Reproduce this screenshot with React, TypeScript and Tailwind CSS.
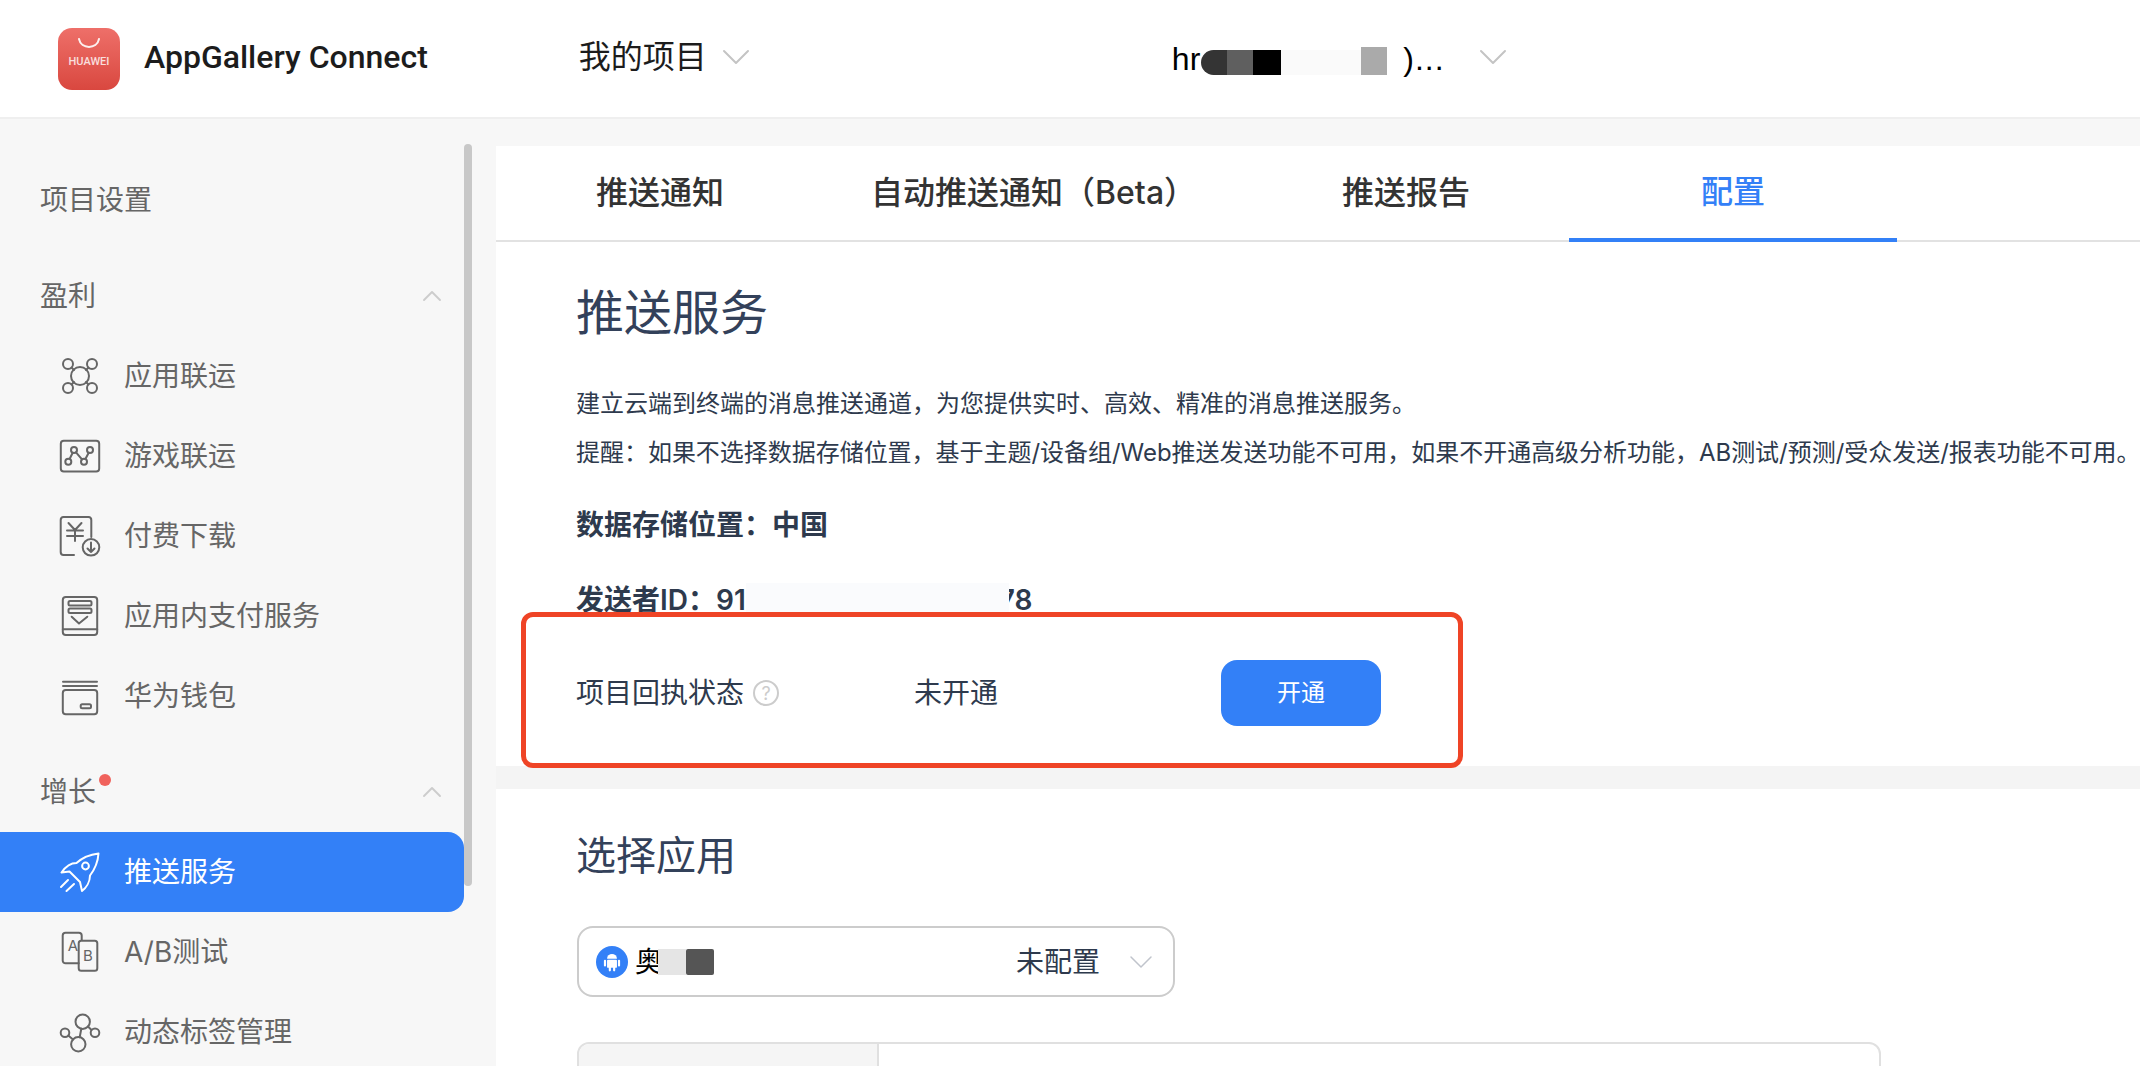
import { ChevronDown, ChevronUp } from 'lucide-react'
import type { ReactNode } from 'react'

const Svg = ({ children }: { children: ReactNode }) => (
  <svg
    viewBox="0 0 40 40"
    width={40}
    height={40}
    fill="none"
    stroke="currentColor"
    strokeWidth={2}
    strokeLinecap="round"
    strokeLinejoin="round"
    className="shrink-0 overflow-visible"
  >
    {children}
  </svg>
)

const HubIcon = () => (
  <Svg>
    <circle cx="20" cy="20" r="9" />
    <circle cx="8" cy="8" r="5" />
    <circle cx="32" cy="8" r="5" />
    <circle cx="8" cy="32" r="5" />
    <circle cx="32" cy="32" r="5" />
    <path d="M11.5 11.5 14 14M28.5 11.5 26 14M11.5 28.5 14 26M28.5 28.5 26 26" />
  </Svg>
)

const GameIcon = () => (
  <Svg>
    <rect x="0.8" y="4.8" width="38.4" height="30.6" rx="3" />
    <circle cx="8.3" cy="25.7" r="3" />
    <circle cx="14" cy="14" r="3" />
    <circle cx="24" cy="25.7" r="3" />
    <circle cx="30" cy="14" r="3" />
    <path d="M9.6 23 12.7 16.7M16 16.3 22 23.4M25.4 23 28.7 16.7" />
  </Svg>
)

const PaidIcon = () => (
  <Svg>
    <path d="M14 39H3.5A3 3 0 0 1 .7 36V4A3 3 0 0 1 3.5 1H28.5A3 3 0 0 1 31.3 4V21" />
    <path d="M8.5 7 15 14 21.5 7M7 14.5H23M7 20H23M15 14V25" />
    <circle cx="31" cy="31.3" r="8.3" />
    <path d="M31 26.5V36M27.5 32.5 31 36 34.5 32.5" />
  </Svg>
)

const PayIcon = () => (
  <Svg>
    <rect x="2.8" y="1" width="34.4" height="38" rx="3" />
    <rect x="8.5" y="5" width="23" height="4.6" rx="1.5" />
    <rect x="8.5" y="12.4" width="23" height="4.6" rx="1.5" />
    <path d="M11.7 20.7 19 27.5 27.3 20.7M2.8 33.3H37.2" />
  </Svg>
)

const WalletIcon = () => (
  <Svg>
    <path d="M3 5.7H37M3 10H37" />
    <rect x="2.8" y="14" width="34.4" height="24.3" rx="3" />
    <rect x="20.7" y="28.3" width="10.3" height="4" rx="1.5" />
  </Svg>
)

const RocketIcon = () => (
  <Svg>
    <path d="M38.5 1.5C30 2.5 22 6 16.5 11 12 11 6 14 1.5 20.5L9.5 19.5 20 30 22 39C26 36 30 30 30 23.5 35 17 38 9 38.5 1.5Z" />
    <circle cx="25.5" cy="14" r="3.4" />
    <path d="M1 35 8 28M6.5 39 14 32" />
  </Svg>
)

const AbIcon = () => (
  <Svg>
    <path d="M18.7 31.3H5.5A2.8 2.8 0 0 1 2.7 28.5V3.5A2.8 2.8 0 0 1 5.5.8H18.9A2.8 2.8 0 0 1 21.7 3.5V8" />
    <rect x="18.7" y="8.7" width="18.6" height="30" rx="2.5" />
    <text x="13" y="19" fontSize="15" textAnchor="middle" fill="currentColor" stroke="none" fontFamily="Inter, sans-serif">A</text>
    <text x="28" y="29" fontSize="15" textAnchor="middle" fill="currentColor" stroke="none" fontFamily="Inter, sans-serif">B</text>
  </Svg>
)

const TagIcon = () => (
  <Svg>
    <circle cx="22.7" cy="9.7" r="7.2" />
    <circle cx="18.3" cy="32.3" r="7.2" />
    <circle cx="5" cy="20.7" r="4.3" />
    <circle cx="35" cy="20.7" r="4.3" />
    <path d="M21.3 16.8 19.7 25.2M8.3 23.5 13 27.5M28 14.5 31.5 18" />
  </Svg>
)

const AndroidIcon = () => (
  <svg viewBox="0 0 20 24" width={18} height={22} fill="#ffffff">
    <path d="M4.5 8.5A5.5 5.5 0 0 1 15.5 8.5Z" />
    <rect x="4.5" y="9.5" width="11" height="9" rx="1" />
    <rect x="1" y="9.5" width="2.4" height="7.5" rx="1.2" />
    <rect x="16.6" y="9.5" width="2.4" height="7.5" rx="1.2" />
    <rect x="6.4" y="17" width="2.4" height="5.5" rx="1.2" />
    <rect x="11.2" y="17" width="2.4" height="5.5" rx="1.2" />
  </svg>
)

const menuTop = [
  { label: '应用联运', icon: <HubIcon /> },
  { label: '游戏联运', icon: <GameIcon /> },
  { label: '付费下载', icon: <PaidIcon /> },
  { label: '应用内支付服务', icon: <PayIcon /> },
  { label: '华为钱包', icon: <WalletIcon /> },
]

const NavItem = ({ label, icon, active }: { label: string; icon: ReactNode; active?: boolean }) => (
  <div
    className={
      active
        ? 'flex h-[80px] w-[464px] items-center gap-[24px] rounded-r-[16px] bg-[#3380f7] pl-[60px] text-[28px] text-white'
        : 'flex h-[80px] w-[464px] items-center gap-[24px] pl-[60px] text-[28px] text-[#666666]'
    }
  >
    {icon}
    <span>{label}</span>
  </div>
)

const Group = ({ label, dot }: { label: string; dot?: boolean }) => (
  <div className="flex h-[80px] w-[464px] items-center justify-between pl-[40px] pr-[16px] text-[28px] text-[#666666]">
    <span className="relative">
      {label}
      {dot && <span className="absolute right-[-15px] top-[3px] h-[12px] w-[12px] rounded-full bg-[#f0625c]" />}
    </span>
    <ChevronUp size={32} strokeWidth={1.4} className="text-[#cccccc]" />
  </div>
)

const tabs = ['推送通知', '自动推送通知（Beta）', '推送报告']

export default function App() {
  return (
    <div className="flex h-[1066px] w-[2140px] flex-col overflow-hidden bg-[#f7f7f7] font-['Inter','Noto_Sans_CJK_SC',sans-serif] text-[#2e3a4d]">
      <header className="flex h-[119px] shrink-0 items-center border-b-2 border-[#efefef] bg-white pb-[4px] text-[32px] text-[#1c1c1c]">
        <div className="ml-[58px] mt-[4px] flex h-[62px] w-[62px] flex-col items-center rounded-[14px] bg-gradient-to-b from-[#ee6f69] to-[#d9473f] pt-[10px] text-white">
          <svg viewBox="0 0 22 11" width={22} height={11} fill="none" stroke="currentColor" strokeWidth={2} strokeLinecap="round" className="opacity-90">
            <path d="M1 1C3 11.5 19 11.5 21 1" />
          </svg>
          <span className="mt-[7px] font-['Roboto',sans-serif] text-[11px] font-medium leading-[12px] opacity-80">HUAWEI</span>
        </div>
        <span className="ml-[24px] font-['Roboto',sans-serif] text-[32px] font-medium">AppGallery Connect</span>
        <span className="ml-[151px]">我的项目</span>
        <ChevronDown size={48} strokeWidth={1} className="ml-[5px] text-[#c4c4c4]" />
        <div className="ml-[412px] flex h-[40px] items-end font-['Liberation_Sans',sans-serif] leading-[36px] text-black">
          <span>hr</span>
          <span className="mb-[2px] ml-[1px] h-[25px] w-[26px] rounded-l-full bg-[#343434]" />
          <span className="mb-[2px] h-[25px] w-[26px] bg-[#5f5f5f]" />
          <span className="mb-[2px] h-[25px] w-[28px] bg-black" />
          <span className="mb-[2px] h-[25px] w-[80px] bg-[#fafafa]" />
          <span className="mb-[2px] h-[28px] w-[26px] bg-[#aaaaaa]" />
          <span className="ml-[16px] tracking-[1px]">)...</span>
        </div>
        <ChevronDown size={48} strokeWidth={1} className="ml-[24px] text-[#c4c4c4]" />
      </header>

      <div className="flex min-h-0 flex-1">
        <aside className="relative w-[496px] shrink-0 pt-[41px]">
          <div className="flex h-[80px] w-[464px] items-center pl-[40px] text-[28px] text-[#666666]">项目设置</div>
          <div className="mt-[16px]">
            <Group label="盈利" />
          </div>
          {menuTop.map((m) => (
            <NavItem key={m.label} label={m.label} icon={m.icon} />
          ))}
          <div className="mt-[16px]">
            <Group label="增长" dot />
          </div>
          <NavItem label="推送服务" icon={<RocketIcon />} active />
          <NavItem label="A/B测试" icon={<AbIcon />} />
          <NavItem label="动态标签管理" icon={<TagIcon />} />
          <div className="absolute left-[464px] top-[25px] h-[742px] w-[8px] rounded-full bg-[#c8c8c8]" />
        </aside>

        <main className="mt-[27px] min-w-0 flex-1 bg-[#f4f4f4]">
          <div className="relative bg-white pb-[40px]">
            <nav className="flex h-[96px] border-b-2 border-[#e2e2e2] text-[32px] font-medium text-[#333333]">
              <div className="flex items-center pl-[100px]">{tabs[0]}</div>
              <div className="ml-[147px] flex items-center">{tabs[1]}</div>
              <div className="ml-[146px] flex items-center">{tabs[2]}</div>
              <div className="ml-[99px] flex h-[96px] w-[328px] items-center justify-center border-b-4 border-[#3380f7] text-[#3380f7]">配置</div>
            </nav>
            <div className="pl-[80px]">
              <h1 className="mt-[39px] text-[48px] font-normal leading-[64px] text-[#33415a]">推送服务</h1>
              <p className="mt-[34px] text-[24px] leading-[49px]">建立云端到终端的消息推送通道，为您提供实时、高效、精准的消息推送服务。</p>
              <p className="whitespace-nowrap text-[24px] leading-[49px] tracking-[-0.03px]">提醒：如果不选择数据存储位置，基于主题/设备组/Web推送发送功能不可用，如果不开通高级分析功能，AB测试/预测/受众发送/报表功能不可用。</p>
              <p className="mt-[24px] text-[28px] font-semibold leading-[49px]">数据存储位置：中国</p>
              <div className="mt-[25px] flex h-[49px] items-center text-[28px] font-semibold">
                <span>发送者ID：91</span>
                <span className="relative z-10 mr-[-10px] h-[34px] w-[263px] bg-[#fafbfd]" />
                <span>78</span>
              </div>
              <div className="mt-[36px] flex h-[66px] items-center text-[28px]">
                <span>项目回执状态</span>
                <span className="ml-[9px] flex h-[26px] w-[26px] items-center justify-center rounded-full border-2 border-[#cccccc] text-[18px] text-[#cccccc]">?</span>
                <span className="ml-[135px]">未开通</span>
                <button className="ml-[223px] h-[66px] w-[160px] rounded-[16px] bg-[#3380f7] text-[24px] text-white">开通</button>
              </div>
            </div>
            <div className="absolute left-[25px] top-[466px] z-20 h-[156px] w-[942px] rounded-[12px] border-[5px] border-[#ef4426]" />
          </div>

          <div className="mt-[23px] h-[400px] bg-white pl-[81px]">
            <h2 className="ml-[-1px] pt-[39px] text-[40px] font-normal leading-[56px] text-[#33415a]">选择应用</h2>
            <div className="mt-[42px] flex h-[71px] w-[598px] items-center rounded-[16px] border-2 border-[#cccccc] pl-[17px] pr-[12px] text-[28px]">
              <span className="flex h-[32px] w-[32px] shrink-0 items-center justify-center rounded-full bg-[#3380f7]">
                <AndroidIcon />
              </span>
              <span className="ml-[7px] text-black">奥</span>
              <span className="ml-[-5px] h-[26px] w-[28px] bg-[#e5e5e5]" />
              <span className="h-[26px] w-[28px] rounded-[2px] bg-[#555555]" />
              <span className="ml-auto">未配置</span>
              <ChevronDown size={40} strokeWidth={0.9} className="ml-[21px] text-[#c0c4cc]" />
            </div>
            <div className="mt-[45px] flex h-[100px] w-[1304px] rounded-t-[12px] border-2 border-[#e0e0e0]">
              <div className="w-[300px] rounded-tl-[10px] border-r-2 border-[#e0e0e0] bg-[#f5f5f5]" />
            </div>
          </div>
        </main>
      </div>
    </div>
  )
}
